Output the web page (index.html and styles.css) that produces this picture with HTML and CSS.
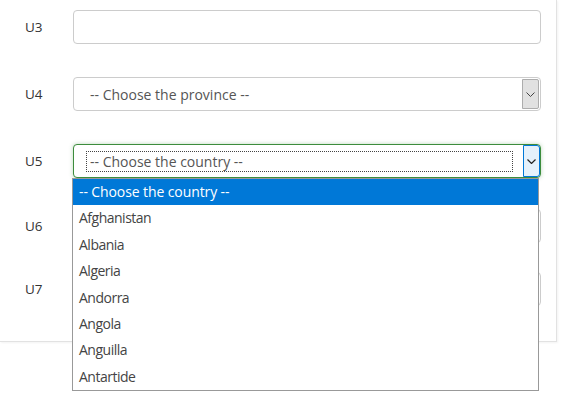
FILE: index.html
```html
<!DOCTYPE html>
<html>
<head>
<meta charset="utf-8">
<link rel="stylesheet" href="styles.css">
</head>
<body>
<div class="card">
  <div class="row">
    <div class="label">U3</div>
    <div class="field input"></div>
  </div>
  <div class="row">
    <div class="label">U4</div>
    <div class="field select">
      <span class="value">-- Choose the province --</span>
      <span class="btn"><svg width="9" height="5" viewBox="0 0 9 5"><path d="M0.5 0.5 L4.5 4.5 L8.5 0.5" fill="none" stroke="#444" stroke-width="1"/></svg></span>
    </div>
  </div>
  <div class="row">
    <div class="label">U5</div>
    <div class="field select focus">
      <span class="value"><span class="focusring">-- Choose the country --</span></span>
      <span class="btn"><svg width="9" height="5" viewBox="0 0 9 5"><path d="M0.5 0.5 L4.5 4.5 L8.5 0.5" fill="none" stroke="#222" stroke-width="1.2"/></svg></span>
    </div>
  </div>
  <div class="row r6">
    <div class="label">U6</div>
    <div class="field input"></div>
  </div>
  <div class="row r7">
    <div class="label">U7</div>
    <div class="field input"></div>
  </div>
</div>
<ul class="list">
  <li class="sel">-- Choose the country --</li>
  <li>Afghanistan</li>
  <li>Albania</li>
  <li>Algeria</li>
  <li>Andorra</li>
  <li>Angola</li>
  <li>Anguilla</li>
  <li>Antartide</li>
</ul>
</body>
</html>
```
FILE: styles.css
```css
* { box-sizing: border-box; }
html { height: 100%; margin: 0; padding: 0; background: #fff; }
body {
  margin: 0;
  padding: 0;
  min-height: 100%;
  position: relative;
  background: #fff;
  font-family: "Open Sans", "Liberation Sans", sans-serif;
  font-size: 14px;
  color: #333;
}
.card {
  width: 557px;
  height: 342px;
  padding-top: 10px;
  border-right: 1px solid #e2e2e2;
  border-bottom: 1px solid #e2e2e2;
  box-shadow: 1px 1px 2px rgba(0,0,0,0.05);
  display: flex;
  flex-direction: column;
}
.row { display: flex; align-items: center; height: 34px; margin-bottom: 33px; }
.row.r6 { margin-top: -2px; margin-bottom: 29px; }
.label { width: 73px; padding-left: 25px; font-size: 13.5px; color: #333; }
.field {
  width: 468px;
  height: 34px;
  border: 1px solid #ccc;
  border-radius: 4px;
  background: #fff;
}
.select { display: flex; align-items: center; }
.select .value { flex: 1; padding-left: 16px; color: #555; font-size: 14px; }
.select .btn {
  width: 17px;
  align-self: stretch;
  margin: 1px 1px 1px 0;
  background: #e1e1e1;
  border: 1px solid #adadad;
  border-radius: 0 2px 2px 0;
  display: flex;
  align-items: center;
  justify-content: center;
}
.select.focus {
  border-color: #3c8c3c;
  box-shadow: 0 0 4px rgba(60,140,60,0.35);
}
.select.focus .value { padding-left: 12px; }
.focusring {
  display: block;
  width: 427px;
  height: 21px;
  line-height: 19px;
  padding-left: 3px;
  border: 1px dotted #444;
}
.select.focus .btn {
  background: #e5f1fb;
  border-color: #0078d7;
  margin: 0;
  border-radius: 0 3px 3px 0;
}
.list {
  position: absolute;
  left: 72px;
  top: 178px;
  width: 467px;
  margin: 0;
  padding: 0;
  list-style: none;
  background: #fff;
  border: 1px solid #999;
  z-index: 5;
}
.list li {
  height: 26.4px;
  line-height: 26.4px;
  padding-left: 6px;
  font-size: 14px;
  color: #444;
  letter-spacing: -0.5px;
}
.list li.sel { background: #0078d7; color: #fff; letter-spacing: -0.1px; }
```
